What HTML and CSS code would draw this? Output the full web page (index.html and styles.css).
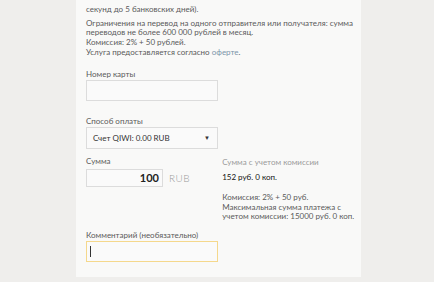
FILE: index.html
```html
<!DOCTYPE html>
<html lang="ru">
<head>
<meta charset="utf-8">
<link rel="stylesheet" href="styles.css">
</head>
<body>
<div class="page">
  <div class="panel">
    <p class="intro first">секунд до 5 банковских дней).</p>
    <p class="intro">Ограничения на перевод на одного отправителя или получателя: сумма переводов не более 600 000 рублей в месяц.<br>Комиссия: 2% + 50 рублей.<br>Услуга предоставляется согласно <span class="link">оферте</span>.</p>

    <div class="field f-card">
      <div class="label">Номер карты</div>
      <div class="input wide"></div>
    </div>

    <div class="field f-pay">
      <div class="label">Способ оплаты</div>
      <div class="input wide select"><span>Счет QIWI: 0.00 RUB</span><span class="arrow">▼</span></div>
    </div>

    <div class="sum-row">
      <div class="field">
        <div class="label">Сумма</div>
        <div class="amount-line">
          <div class="input amount">100</div>
          <span class="cur">RUB</span>
        </div>
      </div>
      <div class="summary">
        <div class="s-title">Сумма с учетом комиссии</div>
        <div class="s-total">152 руб. 0 коп.</div>
        <div class="s-note">Комиссия: 2% + 50 руб.<br>Максимальная сумма платежа с<br>учетом комиссии: 15000 руб. 0 коп.</div>
      </div>
    </div>

    <div class="field f-comment">
      <div class="label">Комментарий (необязательно)</div>
      <div class="input wide focus"><span class="caret"></span></div>
    </div>
  </div>
</div>
</body>
</html>
```

FILE: styles.css
```css
html, body {
  margin: 0;
  padding: 0;
  background: #efeeec;
}
body {
  font-family: Lato, "Open Sans", sans-serif;
  font-size: 8px;
  color: #5a5a5a;
  width: 434px;
  height: 282px;
  overflow: hidden;
}
.page {
  display: flex;
  padding-left: 76px;
}
.panel {
  width: 275px;
  height: 277px;
  background: #f9f9f8;
  padding-left: 10px;
}
.intro {
  margin: 4px 0 0;
  line-height: 9.7px;
}
.intro.first {
  margin-top: 5px;
}
.link {
  color: #7b95aa;
}
.label {
  line-height: 10px;
  color: #5a5a5a;
}
.input {
  box-sizing: border-box;
  border: 1px solid #dcdcdc;
  background: #fafafa;
}
.wide {
  width: 132px;
  height: 21px;
}
.f-card {
  margin-top: 11px;
}
.f-card .input,
.f-pay .input,
.f-comment .input {
  margin-top: 1px;
}
.f-pay {
  margin-top: 15px;
}
.select {
  height: 22px;
  display: flex;
  align-items: center;
  justify-content: space-between;
  padding: 0 7px 0 6px;
  color: #333;
  font-size: 8px;
}
.arrow {
  font-size: 6px;
  color: #333;
}
.sum-row {
  display: flex;
  margin-top: 7px;
}
.amount-line {
  display: flex;
  align-items: center;
  margin-top: 3px;
}
.amount {
  width: 77px;
  height: 18px;
  text-align: right;
  padding-right: 3px;
  font-size: 11px;
  line-height: 16px;
  color: #222;
  font-weight: bold;
}
.cur {
  margin-left: 6px;
  font-size: 10px;
  font-weight: 300;
  color: #999;
  letter-spacing: 0.5px;
}
.summary {
  margin-left: 32px;
  margin-top: 2px;
  line-height: 9.7px;
}
.s-title {
  color: #9a9a9a;
}
.s-total {
  margin-top: 6px;
  color: #111;
}
.s-note {
  margin-top: 10px;
  color: #5a5a5a;
}
.f-comment {
  margin-top: 8px;
}
.focus {
  border-color: #f5d88c;
  height: 21px;
  display: flex;
  align-items: center;
  padding-left: 3px;
}
.caret {
  width: 1px;
  height: 11px;
  background: #333;
}
```
